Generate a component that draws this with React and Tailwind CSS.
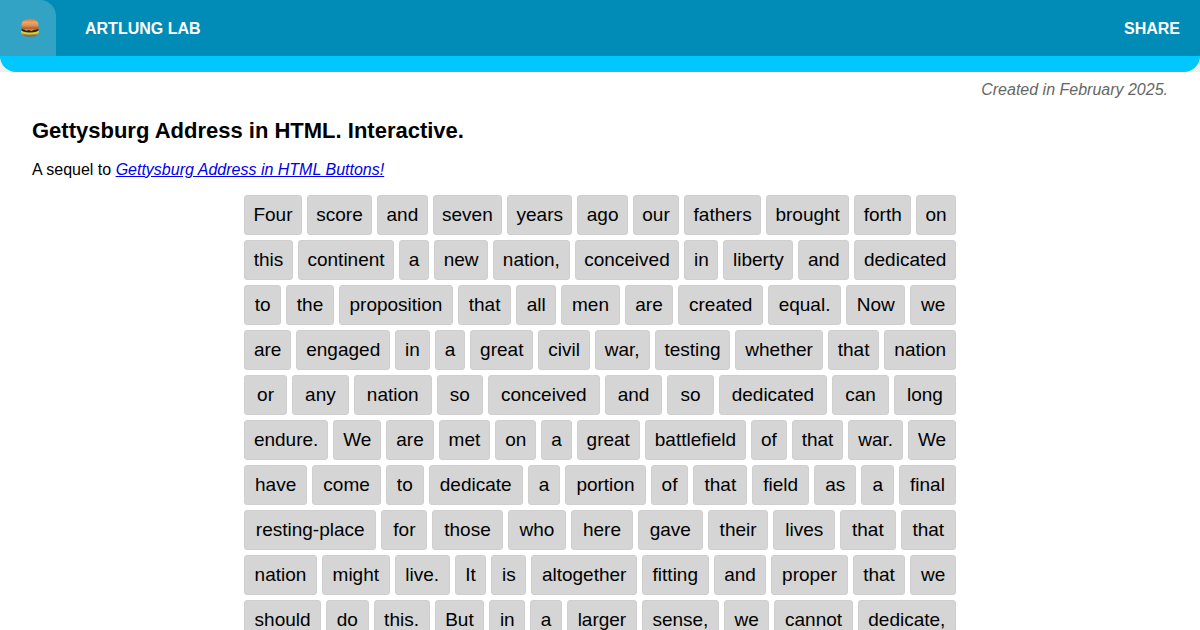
const LINES = [
  'Four score and seven years ago our fathers brought forth on',
  'this continent a new nation, conceived in liberty and dedicated',
  'to the proposition that all men are created equal. Now we',
  'are engaged in a great civil war, testing whether that nation',
  'or any nation so conceived and so dedicated can long',
  'endure. We are met on a great battlefield of that war. We',
  'have come to dedicate a portion of that field as a final',
  'resting-place for those who here gave their lives that that',
  'nation might live. It is altogether fitting and proper that we',
  'should do this. But in a larger sense, we cannot dedicate,',
];

const WORDS = LINES.join(' ').split(' ');

function Burger() {
  return (
    <svg viewBox="0 0 20 20" className="size-5" aria-hidden="true">
      <defs>
        <linearGradient id="bun" x1="0" y1="0" x2="0" y2="1">
          <stop offset="0" stopColor="#c77a3c" />
          <stop offset="0.4" stopColor="#eda566" />
          <stop offset="0.75" stopColor="#dd8c4c" />
          <stop offset="1" stopColor="#b5602c" />
        </linearGradient>
        <linearGradient id="base" x1="0" y1="0" x2="0" y2="1">
          <stop offset="0" stopColor="#e0a060" />
          <stop offset="1" stopColor="#94501f" />
        </linearGradient>
      </defs>
      <path d="M1.800 14.400h16.400v1.200c0 2.300-2.800 3-8.200 3s-8.200-.7-8.200-3z" fill="url(#base)" />
      <path d="M1 13c0-1.200 18-1.200 18 0 .3 1.800-.8 2.500-2.300 2.800-4 .9-9.400.9-13.400 0C1.800 15.500.7 14.800 1 13z" fill="#c3d43c" />
      <path d="M1.600 10.600h16.800c.6 1.400-.2 2.500-1.600 3-4 1.300-9.600 1.300-13.600 0-1.400-.5-2.200-1.600-1.600-3z" fill="#2c2214" />
      <path d="M1.400 11l3 .4 2.100 1.300 2.300-.8 2.700 1.100 2.500-1.300 4.600-.7-.5-1H2z" fill="#d59a35" />
      <path d="M1.300 9.600c2-1 15.400-1 17.400 0 .3 1-.4 1.400-1.400 1.500-5 .5-9.600.5-14.600 0-1-.1-1.700-.5-1.400-1.500z" fill="#b9623a" />
      <path d="M1.400 7.600C1.400 3 4.600.8 10 .8s8.600 2.200 8.600 6.800c0 1.700-3 2.500-8.600 2.500S1.400 9.300 1.400 7.600z" fill="url(#bun)" />
      <g fill="#f4c58e">
        <ellipse cx="6.500" cy="4" rx=".6" ry=".3" />
        <ellipse cx="10" cy="3" rx=".6" ry=".3" />
        <ellipse cx="13.500" cy="4" rx=".6" ry=".3" />
      </g>
    </svg>
  );
}

export default function App() {
  return (
    <div className="bg-white font-['Liberation_Sans',Arial,sans-serif] text-base text-black">
      <div className="bg-[#eeeeee]">
        <header className="overflow-hidden rounded-b-2xl border-b-16 border-[#00c8ff] bg-[#008cb6]">
          <nav className="flex h-14 items-center font-bold text-white">
            <button
              type="button"
              aria-label="Menu"
              className="flex size-14 items-center justify-center rounded-tr-2xl bg-[#33a3c5] pl-1"
            >
              <Burger />
            </button>
            <a href="#lab" className="ml-[29px] pt-0.5 uppercase">
              Artlung Lab
            </a>
            <button type="button" className="ml-auto px-5 pt-0.5 uppercase">
              Share
            </button>
          </nav>
        </header>
      </div>
      <main className="px-8 pt-2">
        <p className="text-right leading-5 text-[#666666] italic">Created in February 2025.</p>
        <h1 className="mt-4 text-[22px] leading-[30px] font-bold">Gettysburg Address in HTML. Interactive.</h1>
        <p className="mt-3 leading-6">
          A sequel to{' '}
          <a href="#buttons" className="text-[#0000ee] italic underline">
            Gettysburg Address in HTML Buttons!
          </a>
        </p>
        <div className="mx-auto mt-[13px] flex max-w-178 flex-wrap gap-[5px]">
          {WORDS.map((word, i) => (
            <button
              key={i}
              type="button"
              className="h-10 grow rounded-[3px] border border-[#cfcfcf] bg-[#d5d5d5] px-2 text-[19px]"
            >
              {word}
            </button>
          ))}
        </div>
      </main>
    </div>
  );
}
